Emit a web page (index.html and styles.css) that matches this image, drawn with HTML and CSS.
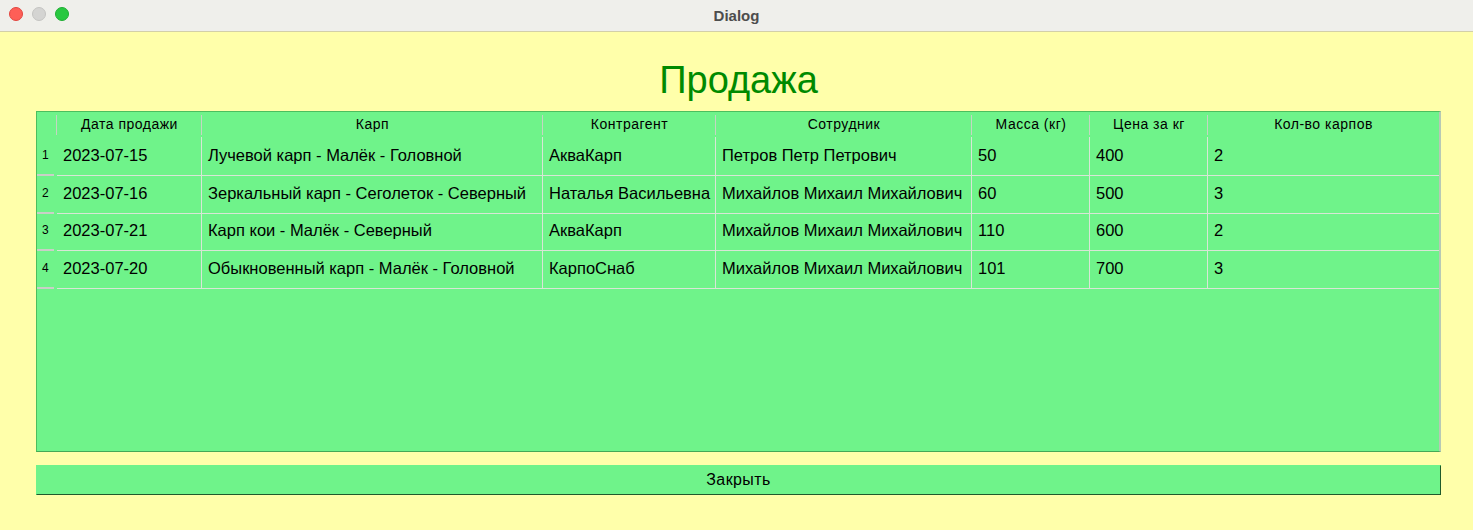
FILE: index.html
```html
<!DOCTYPE html>
<html lang="ru">
<head>
<meta charset="utf-8">
<title>Dialog</title>
<link rel="stylesheet" href="styles.css">
</head>
<body>
<div class="window">
  <div class="titlebar">
    <div class="lights">
      <span class="light red"></span>
      <span class="light gray"></span>
      <span class="light green"></span>
    </div>
    <div class="wtitle">Dialog</div>
  </div>
  <div class="content">
    <h1 class="heading">Продажа</h1>
    <div class="table">
      <div class="row head">
        <div class="c rn"></div>
        <div class="c">Дата продажи</div>
        <div class="c">Карп</div>
        <div class="c">Контрагент</div>
        <div class="c">Сотрудник</div>
        <div class="c">Масса (кг)</div>
        <div class="c">Цена за кг</div>
        <div class="c last">Кол-во карпов</div>
      </div>
      <div class="row body">
        <div class="c rn">1</div>
        <div class="c">2023-07-15</div>
        <div class="c">Лучевой карп - Малёк - Головной</div>
        <div class="c">АкваКарп</div>
        <div class="c">Петров Петр Петрович</div>
        <div class="c">50</div>
        <div class="c">400</div>
        <div class="c last">2</div>
      </div>
      <div class="row body">
        <div class="c rn">2</div>
        <div class="c">2023-07-16</div>
        <div class="c">Зеркальный карп - Сеголеток - Северный</div>
        <div class="c">Наталья Васильевна</div>
        <div class="c">Михайлов Михаил Михайлович</div>
        <div class="c">60</div>
        <div class="c">500</div>
        <div class="c last">3</div>
      </div>
      <div class="row body">
        <div class="c rn">3</div>
        <div class="c">2023-07-21</div>
        <div class="c">Карп кои - Малёк - Северный</div>
        <div class="c">АкваКарп</div>
        <div class="c">Михайлов Михаил Михайлович</div>
        <div class="c">110</div>
        <div class="c">600</div>
        <div class="c last">2</div>
      </div>
      <div class="row body">
        <div class="c rn">4</div>
        <div class="c">2023-07-20</div>
        <div class="c">Обыкновенный карп - Малёк - Головной</div>
        <div class="c">КарпоСнаб</div>
        <div class="c">Михайлов Михаил Михайлович</div>
        <div class="c">101</div>
        <div class="c">700</div>
        <div class="c last">3</div>
      </div>
    </div>
    <button class="close">Закрыть</button>
  </div>
</div>
</body>
</html>
```
FILE: styles.css
```css
* { box-sizing: border-box; }
html, body { margin: 0; padding: 0; }
body {
  width: 1473px;
  height: 530px;
  overflow: hidden;
  background: #ffffaa;
  font-family: "Liberation Sans", Arial, sans-serif;
  color: #000;
}
.titlebar {
  height: 32px;
  background: #efefeb;
  border-bottom: 1px solid #d3d0a8;
  display: flex;
  align-items: center;
  justify-content: center;
  position: relative;
}
.lights {
  position: absolute;
  left: 9px;
  top: 7px;
  display: flex;
  gap: 9px;
}
.light {
  width: 14px;
  height: 14px;
  border-radius: 50%;
  display: block;
}
.light.red { background: #fe5f57; border: 1px solid #e2463f; }
.light.gray { background: #d4d4d2; border: 1px solid #c4c4c2; }
.light.green { background: #28c840; border: 1px solid #1fae33; }
.wtitle {
  font-size: 15px;
  font-weight: bold;
  color: #4d4d4d;
  margin-top: -1px;
}
.content {
  padding: 0 32px 0 36px;
}
.heading {
  margin: 0;
  height: 79px;
  padding-top: 27px;
  text-align: center;
  font-weight: normal;
  font-size: 38px;
  line-height: 42px;
  color: #008a00;
}
.table {
  height: 341px;
  background: #6ff38a;
  border: 1px solid #4cbe5e;
  border-bottom-color: #46a857;
  border-right: 2px solid #b7c9b5;
}
.row {
  display: grid;
  grid-template-columns: 20px 145px 341px 173px 256px 118px 118px 1fr;
}
.row.head {
  height: 25px;
  font-size: 14px;
  letter-spacing: 0.5px;
}
.row.head .c {
  text-align: center;
  line-height: 25px;
  position: relative;
}
.row.head .c::after {
  content: "";
  position: absolute;
  right: 0;
  top: 3px;
  bottom: 2px;
  width: 1px;
  background: #c4d6c2;
}
.row.head .c.last::after { display: none; }
.row.body {
  height: 37.5px;
  font-size: 16.5px;
}
.row.body .c {
  padding-left: 6px;
  line-height: 37px;
  border-right: 1px solid #d8e6d6;
  border-bottom: 1px solid #d8e6d6;
  white-space: nowrap;
}
.row.body .c.last { border-right: none; }
.row.body .c.rn {
  font-size: 12px;
  padding-left: 5px;
  border-right: none;
  border-bottom: 2px solid #c9cfc7;
  border-image: linear-gradient(to right, transparent 1px, #c9cfc7 1px, #c9cfc7 16px, transparent 16px) 1;
}
.close {
  display: block;
  width: 100%;
  height: 30px;
  margin-top: 13px;
  background: #6ff38a;
  border: 1px solid #6ff38a;
  border-right-color: #1f5a2b;
  border-bottom-color: #1f5a2b;
  font-family: "Liberation Sans", Arial, sans-serif;
  font-size: 16px;
  letter-spacing: 0.4px;
  color: #000;
  padding: 0;
}
```
